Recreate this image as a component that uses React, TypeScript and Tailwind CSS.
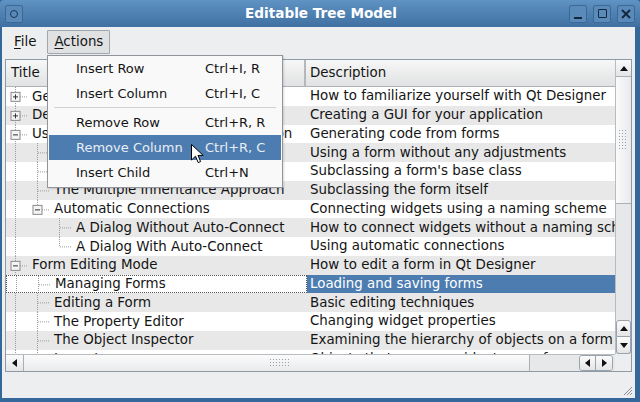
import React from "react";

type Seg = "pipe" | "tee" | "end" | "none";

interface Row {
  title: string;
  desc: string;
  guides: Seg[];
  box?: "+" | "-";
}

const rows: Row[] = [
  { title: "Getting Started", desc: "How to familiarize yourself with Qt Designer", guides: ["tee"], box: "+" },
  { title: "Designing a Component", desc: "Creating a GUI for your application", guides: ["tee"], box: "+" },
  { title: "Using a Component in Your Application", desc: "Generating code from forms", guides: ["tee"], box: "-" },
  { title: "The Direct Approach", desc: "Using a form without any adjustments", guides: ["pipe", "tee"] },
  { title: "The Single Inheritance Approach", desc: "Subclassing a form's base class", guides: ["pipe", "tee"] },
  { title: "The Multiple Inheritance Approach", desc: "Subclassing the form itself", guides: ["pipe", "tee"] },
  { title: "Automatic Connections", desc: "Connecting widgets using a naming scheme", guides: ["pipe", "end"], box: "-" },
  { title: "A Dialog Without Auto-Connect", desc: "How to connect widgets without a naming scheme", guides: ["pipe", "none", "tee"] },
  { title: "A Dialog With Auto-Connect", desc: "Using automatic connections", guides: ["pipe", "none", "end"] },
  { title: "Form Editing Mode", desc: "How to edit a form in Qt Designer", guides: ["tee"], box: "-" },
  { title: "Managing Forms", desc: "Loading and saving forms", guides: ["pipe", "tee"] },
  { title: "Editing a Form", desc: "Basic editing techniques", guides: ["pipe", "tee"] },
  { title: "The Property Editor", desc: "Changing widget properties", guides: ["pipe", "tee"] },
  { title: "The Object Inspector", desc: "Examining the hierarchy of objects on a form", guides: ["pipe", "tee"] },
  { title: "Layouts", desc: "Objects that arrange widgets on a form", guides: ["pipe", "tee"] },
];

const menuItems = [
  { label: "Insert Row", key: "Ctrl+I, R" },
  { label: "Insert Column", key: "Ctrl+I, C" },
  { sep: true },
  { label: "Remove Row", key: "Ctrl+R, R" },
  { label: "Remove Column", key: "Ctrl+R, C", active: true },
  { label: "Insert Child", key: "Ctrl+N" },
];

const LINE = "#9c9c9c";

function Guide({ seg, box }: { seg: Seg; box?: "+" | "-" }) {
  return (
    <svg width="22" height="100%" className="shrink-0 overflow-visible">
      {(seg === "pipe" || seg === "tee") && (
        <line x1="9.5" y1="0" x2="9.5" y2="100%" stroke={LINE} strokeDasharray="1 1" />
      )}
      {seg === "end" && (
        <line x1="9.5" y1="0" x2="9.5" y2="50%" stroke={LINE} strokeDasharray="1 1" />
      )}
      {(seg === "tee" || seg === "end") && (
        <line x1="10" y1="50%" x2="22" y2="50%" stroke={LINE} strokeDasharray="1 1" transform="translate(0,0.5)" />
      )}
      {box && (
        <svg x="0" y="50%" overflow="visible">
          <rect x="5" y="-4" width="9" height="9" fill="#f4f4f4" stroke="#8a8a8a" />
          <line x1="7" y1="0.5" x2="12" y2="0.5" stroke="#333" />
          {box === "+" && <line x1="9.5" y1="-2" x2="9.5" y2="3" stroke="#333" />}
        </svg>
      )}
    </svg>
  );
}

function Arrow({ dir }: { dir: "up" | "down" | "left" | "right" }) {
  const pts = {
    up: "4,1 8,6 0,6",
    down: "0,1 8,1 4,6",
    left: "6,0 6,8 1,4",
    right: "1,0 1,8 6,4",
  }[dir];
  const w = dir === "up" || dir === "down" ? 8 : 7;
  const h = dir === "up" || dir === "down" ? 7 : 8;
  return (
    <svg width={w} height={h}>
      <polygon points={pts} fill="#111" />
    </svg>
  );
}

function Grip({ vertical }: { vertical?: boolean }) {
  const dots = [];
  const cols = vertical ? 3 : 7;
  const rowsN = vertical ? 7 : 3;
  for (let i = 0; i < cols; i++)
    for (let j = 0; j < rowsN; j++)
      dots.push(<rect key={`${i}-${j}`} x={i * 3} y={j * 3} width="1" height="1" fill="#9aa0a8" />);
  return (
    <svg width={cols * 3} height={rowsN * 3}>
      {dots}
    </svg>
  );
}

function TitleButton({ children }: { children: React.ReactNode }) {
  return (
    <div className="w-[18px] h-[18px] rounded-[2px] border border-[#3c6894] bg-[#5a8aba] flex items-center justify-center">
      {children}
    </div>
  );
}

function Cursor() {
  return (
    <svg width="14" height="21" className="absolute left-[191px] top-[144px]">
      <path d="M0.5 0.5 L0.5 16 L4.5 12.2 L7.2 18.6 L9.6 17.6 L7 11.4 L12.2 11.4 Z" fill="#fff" stroke="#000" strokeLinejoin="round" />
    </svg>
  );
}

export default function App() {
  return (
    <div
      className="relative w-[640px] h-[402px] bg-[#34679a] flex flex-col overflow-hidden text-[13.4px] text-[#141414]"
      style={{ fontFamily: '"DejaVu Sans", Verdana, sans-serif' }}
    >
      {/* title bar */}
      <div className="h-[27px] shrink-0 flex items-center px-[5px] bg-gradient-to-b from-[#5f93c4] to-[#3f70a1] rounded-t-[4px]">
        <TitleButton>
          <div className="w-[8px] h-[8px] rounded-full border border-[#1d3550]" />
        </TitleButton>
        <div className="flex-1 text-center text-white font-bold text-[13.6px] pl-[50px]">Editable Tree Model</div>
        <div className="flex gap-[6px]">
          <TitleButton>
            <div className="w-[8px] h-[2px] bg-[#14263a] mt-[8px]" />
          </TitleButton>
          <TitleButton>
            <div className="w-[9px] h-[9px] border-[1.5px] border-[#14263a] rounded-[1px]" />
          </TitleButton>
          <TitleButton>
            <svg width="10" height="10">
              <path d="M1 1 L9 9 M9 1 L1 9" stroke="#14263a" strokeWidth="1.8" />
            </svg>
          </TitleButton>
        </div>
      </div>

      {/* body */}
      <div className="flex-1 mx-[2px] mb-[4px] mr-[5px] bg-[#eceef0] flex flex-col">
        {/* menu bar */}
        <div className="h-[29px] shrink-0 flex items-end pl-[4px] pb-[2px]">
          <div className="h-[24px] px-[8px] flex items-center">
            <span><span className="underline underline-offset-2">F</span>ile</span>
          </div>
          <div className="h-[24px] ml-[3px] px-[6px] flex items-center bg-[#dfe1e3] border border-[#a3a6aa] rounded-[1px]">
            <span><span className="underline underline-offset-2">A</span>ctions</span>
          </div>
        </div>

        {/* tree widget */}
        <div className="mx-[3px] mt-[3px] h-[313px] border border-[#8e9aa6] bg-white grid grid-cols-[1fr_16px] grid-rows-[1fr_17px]">
          {/* viewport */}
          <div className="overflow-hidden flex flex-col">
            <div className="h-[27px] shrink-0 flex bg-gradient-to-b from-[#f7f7f7] to-[#e1e2e3] border-b border-[#b0b3b6]">
              <div className="w-[300px] shrink-0 flex items-center pl-[5px] border-r-2 border-r-[#b5b8bb]">Title</div>
              <div className="flex-1 flex items-center pl-[4px]">Description</div>
            </div>
            <div className="flex-1 overflow-hidden">
              {rows.map((r, i) => {
                const current = i === 10;
                return (
                  <div
                    key={i}
                    className={`h-[18.75px] flex ${i % 2 === 1 ? "bg-[#e8e8e8]" : "bg-white"}`}
                  >
                    <div
                      className={`w-[301px] shrink-0 flex items-stretch overflow-hidden whitespace-nowrap ${current ? "border border-dotted border-[#555]" : ""}`}
                    >
                      {r.guides.map((g, k) => (
                        <Guide key={k} seg={g} box={k === r.guides.length - 1 ? r.box : undefined} />
                      ))}
                      <span className="pl-[4px] self-center leading-none">{r.title}</span>
                    </div>
                    <div
                      className={`flex-1 flex items-center pl-[3px] whitespace-nowrap overflow-hidden ${current ? "bg-[#4d7db0] text-white" : ""}`}
                    >
                      {r.desc}
                    </div>
                  </div>
                );
              })}
            </div>
          </div>

          {/* vertical scrollbar */}
          <div className="flex flex-col bg-[#e6e8ea] border-l border-[#b8bcc0]">
            <div className="h-[17px] flex items-center justify-center bg-gradient-to-b from-[#fbfbfb] to-[#e3e5e7] border-b border-[#aab0b6]">
              <Arrow dir="up" />
            </div>
            <div className="h-[127px] flex items-center justify-center bg-gradient-to-r from-[#fafafa] to-[#e8eaec] border-b border-[#aab0b6]">
              <Grip vertical />
            </div>
            <div className="flex-1" />
            <div className="h-[17px] flex items-center justify-center bg-gradient-to-b from-[#fbfbfb] to-[#e3e5e7] border border-[#9aa2aa] rounded-t-[3px]">
              <Arrow dir="up" />
            </div>
            <div className="h-[17px] flex items-center justify-center bg-gradient-to-b from-[#fbfbfb] to-[#e3e5e7] border border-t-0 border-[#9aa2aa] rounded-b-[3px]">
              <Arrow dir="down" />
            </div>
          </div>

          {/* horizontal scrollbar */}
          <div className="flex bg-[#e6e8ea] border-t border-[#b8bcc0]">
            <div className="w-[18px] flex items-center justify-center bg-gradient-to-b from-[#fbfbfb] to-[#e3e5e7] border-r border-[#aab0b6]">
              <Arrow dir="left" />
            </div>
            <div className="w-[506px] flex items-center justify-end pr-[238px] bg-gradient-to-b from-[#fbfbfb] to-[#e8eaec] border-r border-[#aab0b6]">
              <Grip />
            </div>
            <div className="flex-1" />
            <div className="flex mr-[2px] border border-[#9aa2aa] rounded-[3px] overflow-hidden">
              <div className="w-[16px] flex items-center justify-center bg-gradient-to-b from-[#fbfbfb] to-[#e3e5e7] border-r border-[#9aa2aa]">
                <Arrow dir="left" />
              </div>
              <div className="w-[16px] flex items-center justify-center bg-gradient-to-b from-[#fbfbfb] to-[#e3e5e7]">
                <Arrow dir="right" />
              </div>
            </div>
          </div>
          <div className="bg-[#eceef0]" />
        </div>

        {/* bottom area with size grip */}
        <div className="flex-1 flex items-end justify-end p-[2px]">
          <svg width="12" height="12">
            <path d="M11 3 L3 11 M11 6 L6 11 M11 9 L9 11" stroke="#8a9097" strokeWidth="1" />
          </svg>
        </div>
      </div>

      {/* popup menu */}
      <div className="absolute left-[47px] top-[55px] w-[236px] text-[13px] bg-[#f9f9f9] border border-[#8f959b] pb-[2px] shadow-[1px_1px_2px_rgba(0,0,0,0.15)]">
        {menuItems.map((m, i) =>
          "sep" in m ? (
            <div key={i} className="h-[3px] mx-[6px] border-t border-[#cfd2d5] mt-[1px]" />
          ) : (
            <div
              key={i}
              className={`h-[25px] mx-[1px] flex items-center ${m.active ? "bg-[#4d7db0] text-[#e9eef5]" : ""}`}
            >
              <span className="w-[156px] pl-[27px]">{m.label}</span>
              <span>{m.key}</span>
            </div>
          )
        )}
      </div>

      <Cursor />
    </div>
  );
}
